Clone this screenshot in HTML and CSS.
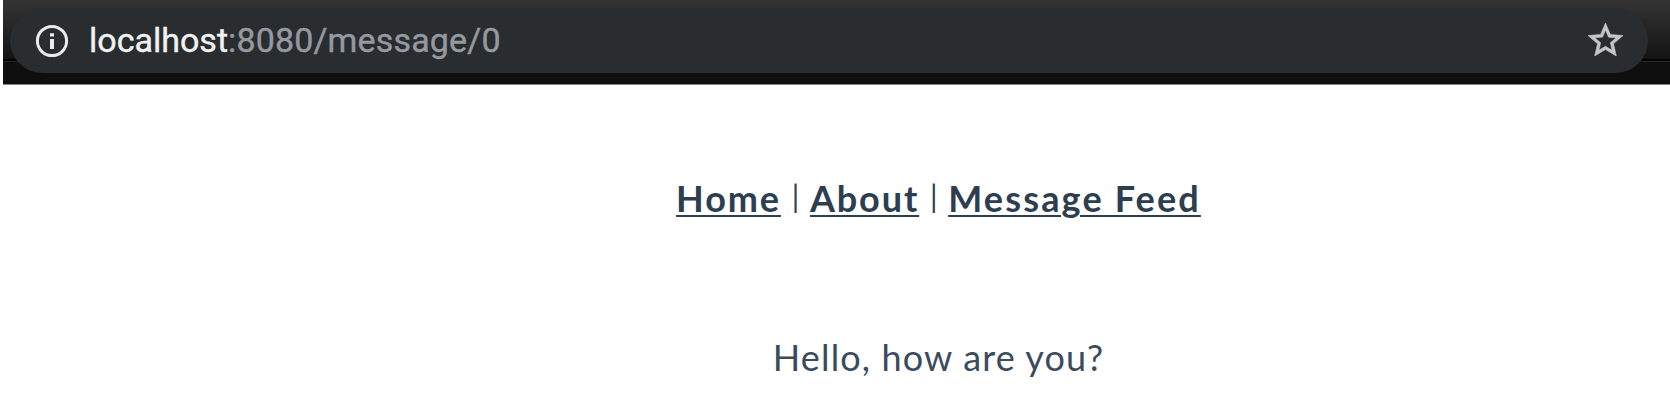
FILE: index.html
```html
<!DOCTYPE html>
<html lang="en">
<head>
<meta charset="utf-8">
<title>Message</title>
<link rel="stylesheet" href="styles.css">
</head>
<body>
<header class="toolbar">
  <div class="address">
    <svg class="info" width="34" height="34" viewBox="0 0 34 34"><circle cx="17" cy="17" r="14.6" fill="none" stroke="#e8eaed" stroke-width="3"/><path d="M15 9.2h4v3.4h-4zM15 15h4v10h-4z" fill="#e8eaed"/></svg>
    <div class="url"><span class="host">localhost</span><span class="path">:8080/message/0</span></div>
    <svg class="star" width="35" height="33" viewBox="2 2 20 19" preserveAspectRatio="none"><path fill="#c3c6ca" stroke="#c3c6ca" stroke-width=".35" d="M22 9.24l-7.19-.62L12 2 9.19 8.63 2 9.24l5.46 4.73L5.82 21 12 17.27 18.18 21l-1.63-7.03L22 9.24zM12 15.4l-3.76 2.27 1-4.28-3.32-2.88 4.38-.38L12 6.1l1.71 4.04 4.38.38-3.32 2.88 1 4.28L12 15.4z"/></svg>
  </div>
</header>
<main class="page">
  <nav class="nav">
    <a class="link home" href="#">Home</a>
    <span class="bar">|</span>
    <a class="link about" href="#">About</a>
    <span class="bar">|</span>
    <a class="link feed" href="#">Message Feed</a>
  </nav>
  <p class="message">Hello, how are you?</p>
</main>
</body>
</html>
```
FILE: styles.css
```css
* { box-sizing: border-box; }
body { margin: 0; background: #fff; overflow: hidden; }
.toolbar {
  margin-left: 3px;
  height: 85px;
  padding: 8px 22px 0 7px;
  border-bottom: 1px solid #858585;
  background: linear-gradient(#343434 0, #292929 20px, #131313 59px, #000 59px, #000 61px, #262626 61px, #262626 62px, #0f0f0f 62px);
}
.address {
  height: 65px;
  border-radius: 33px;
  background: #292d30;
  display: flex;
  align-items: center;
  padding: 0 25px 0 25px;
}
.info { flex: none; }
.url {
  flex: 1;
  margin: 0 0 2px 20px;
  font: 34px/40px Roboto, sans-serif;
  white-space: nowrap;
}
.host { color: #f1f2f4; -webkit-text-stroke: .4px #f1f2f4; }
.path { color: #9599a0; letter-spacing: .15px; -webkit-text-stroke: .4px #9599a0; }
.star { flex: none; margin-bottom: 2px; }
.page { padding-left: 207px; color: #2c3e50; font-family: Lato, sans-serif; }
.nav {
  margin-top: 89px;
  height: 48px;
  display: flex;
  justify-content: center;
  font-size: 36px;
  line-height: 48px;
}
.link {
  color: inherit;
  font-weight: 700;
  letter-spacing: 1.9px;
  text-decoration: underline;
  text-decoration-thickness: 2px;
  text-underline-offset: 3px;
  white-space: nowrap;
}
.feed { letter-spacing: 2.15px; }
.bar { width: 29px; text-align: center; font-size: 30px; line-height: 44px; }
.message { margin: 111px 0 0; text-align: center; font-size: 36px; line-height: 48px; letter-spacing: 1.15px; color: #3b4a5c; }
```
